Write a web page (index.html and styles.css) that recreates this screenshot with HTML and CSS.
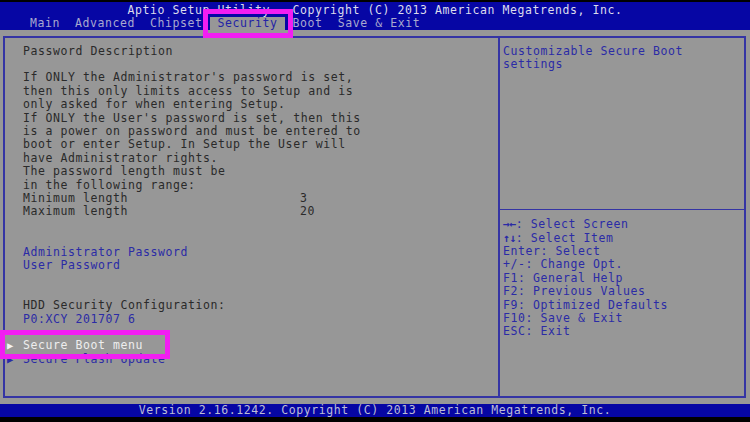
FILE: index.html
```html
<!DOCTYPE html>
<html>
<head>
<meta charset="utf-8">
<link rel="stylesheet" href="styles.css">
</head>
<body>
<div class="screen">
  <header class="header">
    <div class="title">Aptio Setup Utility – Copyright (C) 2013 American Megatrends, Inc.</div>
    <nav class="tabs">
      <span class="tab">Main</span>
      <span class="tab">Advanced</span>
      <span class="tab">Chipset</span>
      <span class="tab active">Security</span>
      <span class="tab">Boot</span>
      <span class="tab">Save &amp; Exit</span>
    </nav>
  </header>
  <main class="main">
    <div class="frame">
      <section class="left">
        <div class="line">Password Description</div>
        <div class="line"></div>
        <div class="line">If ONLY the Administrator's password is set,</div>
        <div class="line">then this only limits access to Setup and is</div>
        <div class="line">only asked for when entering Setup.</div>
        <div class="line">If ONLY the User's password is set, then this</div>
        <div class="line">is a power on password and must be entered to</div>
        <div class="line">boot or enter Setup. In Setup the User will</div>
        <div class="line">have Administrator rights.</div>
        <div class="line">The password length must be</div>
        <div class="line">in the following range:</div>
        <div class="line kv"><span class="key">Minimum length</span><span>3</span></div>
        <div class="line kv"><span class="key">Maximum length</span><span>20</span></div>
        <div class="line"></div>
        <div class="line"></div>
        <div class="line link">Administrator Password</div>
        <div class="line link">User Password</div>
        <div class="line"></div>
        <div class="line"></div>
        <div class="line">HDD Security Configuration:</div>
        <div class="line link">P0:XCY 201707 6</div>
        <div class="line"></div>
        <div class="line sub selected"><span class="arrow">▶</span>Secure Boot menu</div>
        <div class="line sub link"><span class="arrow">▶</span>Secure Flash Update</div>
      </section>
      <aside class="right">
        <div class="help-top">
          <div class="line">Customizable Secure Boot</div>
          <div class="line">settings</div>
        </div>
        <div class="help-keys">
          <div class="line"><b>→←</b>: Select Screen</div>
          <div class="line"><b>↑↓</b>: Select Item</div>
          <div class="line">Enter: Select</div>
          <div class="line">+/-: Change Opt.</div>
          <div class="line">F1: General Help</div>
          <div class="line">F2: Previous Values</div>
          <div class="line">F9: Optimized Defaults</div>
          <div class="line">F10: Save &amp; Exit</div>
          <div class="line">ESC: Exit</div>
        </div>
      </aside>
    </div>
  </main>
  <footer class="footer">Version 2.16.1242. Copyright (C) 2013 American Megatrends, Inc.</footer>
  <div class="mark mark-tab"></div>
  <div class="mark mark-item"></div>
</div>
</body>
</html>
```

FILE: styles.css
```css
* { box-sizing: border-box; }
html, body { margin: 0; padding: 0; background: #000; }
.screen {
  position: relative;
  width: 750px;
  height: 422px;
  background: #979797;
  display: flex;
  flex-direction: column;
  font-family: "DejaVu Sans Mono", "Liberation Mono", monospace;
  font-size: 11.5px;
  letter-spacing: 0.58px;
  color: #2a2a2a;
  overflow: hidden;
}
.header {
  background: #0606a4;
  border-top: 2px solid #000;
  padding-top: 1.5px;
  height: 30px;
}
.title {
  height: 13px;
  line-height: 13px;
  text-align: center;
  color: #dcdcec;
}
.tabs {
  display: flex;
  padding-left: 22.5px;
  height: 13.5px;
  line-height: 13.5px;
}
.tab {
  padding: 0 7.5px;
  color: #a9a9cf;
}
.tab.active {
  background: #979797;
  color: #2323a6;
}
.main {
  flex: 1;
  padding: 6px 4px 6px 3px;
  display: flex;
}
.frame {
  flex: 1;
  display: flex;
  border: 2px solid #3434a4;
}
.line {
  height: 13.4px;
  line-height: 13.4px;
  white-space: pre;
}
.left {
  width: 495px;
  border-right: 2px solid #3434a4;
  padding: 6.7px 0 0 18px;
}
.kv { display: flex; }
.kv .key { width: 277px; }
.link { color: #2b2ba6; }
.sub { position: relative; }
.arrow {
  position: absolute;
  left: -16px;
  font-size: 10.5px;
}
.selected { color: #eeeeee; }
.selected .arrow { color: #f4f4f4; }
.link .arrow { color: #2b2ba6; }
.right {
  flex: 1;
  display: flex;
  flex-direction: column;
  color: #2b2ba6;
}
.help-top {
  height: 172px;
  padding: 6.7px 0 0 3px;
  border-bottom: 1px solid #3434a4;
}
.help-keys {
  padding: 8.3px 0 0 3px;
}
.help-keys b { font-weight: bold; letter-spacing: -0.5px; }
.footer {
  height: 18px;
  background: #0606a4;
  border-bottom: 5px solid #000;
  color: #bdbdd6;
  text-align: center;
  line-height: 13px;
}
.mark {
  position: absolute;
  border: 5px solid #f21ef2;
}
.mark-tab { left: 203px; top: 9px; width: 90px; height: 29px; }
.mark-item { left: 0; top: 330px; width: 170px; height: 29px; }
```
